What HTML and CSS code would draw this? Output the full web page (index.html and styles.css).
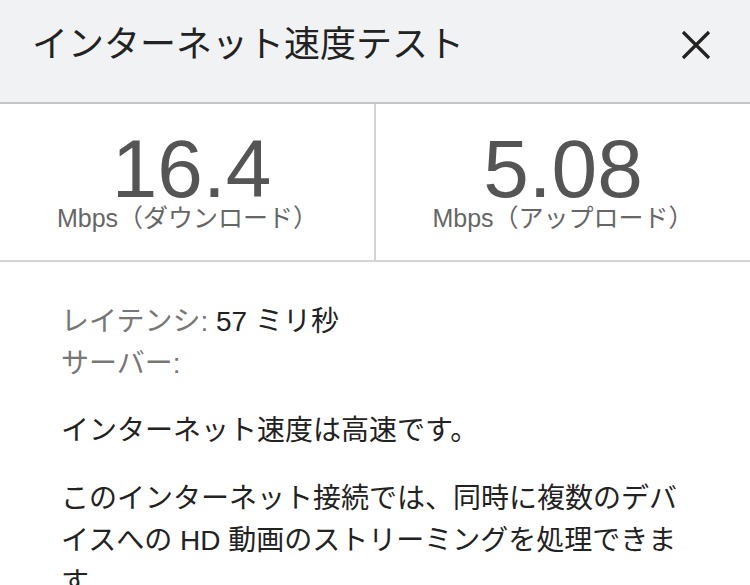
FILE: index.html
```html
<!DOCTYPE html>
<html lang="ja">
<head>
<meta charset="utf-8">
<title>インターネット速度テスト</title>
<link rel="stylesheet" href="styles.css">
</head>
<body>
<div class="sheet">
  <header class="top">
    <h1 class="title">インターネット速度テスト</h1>
    <button class="close" aria-label="閉じる">
      <svg width="30" height="30" viewBox="0 0 30 30" aria-hidden="true">
        <path d="M2 2 L28 28 M28 2 L2 28" stroke="#222" stroke-width="3.2" fill="none"/>
      </svg>
    </button>
  </header>
  <section class="stats">
    <div class="stat">
      <div class="value">16.4</div>
      <div class="unit">Mbps（ダウンロード）</div>
    </div>
    <div class="stat">
      <div class="value">5.08</div>
      <div class="unit">Mbps（アップロード）</div>
    </div>
  </section>
  <section class="details">
    <div class="meta">
      <div class="row"><span class="label">レイテンシ:</span> <span class="val">57 ミリ秒</span></div>
      <div class="row"><span class="label">サーバー:</span></div>
    </div>
    <p class="text">インターネット速度は高速です。</p>
    <p class="text">このインターネット接続では、同時に複数のデバイスへの HD 動画のストリーミングを処理できます。</p>
  </section>
</div>
</body>
</html>
```

FILE: styles.css
```css
html, body {
  margin: 0;
  padding: 0;
  background: #ffffff;
}

body {
  font-family: "Liberation Sans", "Noto Sans CJK JP", sans-serif;
  color: #222222;
}

.sheet {
  width: 750px;
}

.top {
  box-sizing: border-box;
  height: 104px;
  display: flex;
  align-items: center;
  justify-content: space-between;
  padding: 2px 39px 14px 32px;
  background: #f1f2f4;
  border-bottom: 2px solid #c4c4c4;
}

.title {
  margin: 0;
  font-size: 36px;
  font-weight: 400;
  line-height: 1.2;
  color: #222222;
}

.close {
  display: flex;
  padding: 0;
  margin: 0;
  border: 0;
  background: none;
}

.stats {
  display: grid;
  grid-template-columns: 375px 375px;
  border-bottom: 2px solid #d4d4d4;
}

.stat {
  box-sizing: border-box;
  padding: 30px 0 28px;
  text-align: center;
  color: #555555;
}

.stat + .stat {
  border-left: 2px solid #d2d2d2;
  margin-left: -1px;
}

.value {
  font-size: 82px;
  line-height: 70px;
}

.stat:first-child .value {
  padding-left: 8px;
}

.unit {
  font-size: 25px;
  line-height: 28px;
  color: #666666;
}

.details {
  padding: 39px 59px 0 61px;
  font-size: 28px;
  line-height: 42px;
}

.meta {
  margin: 0 0 25px;
}

.label {
  color: #777777;
}

.val {
  color: #222222;
}

.text {
  margin: 0 0 26px;
  color: #222222;
}
```
